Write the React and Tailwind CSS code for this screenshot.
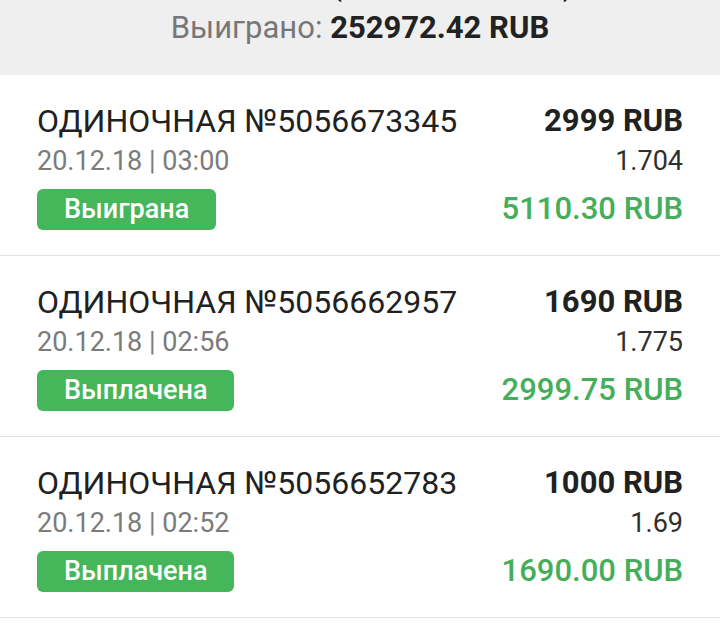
const bets = [
  {
    id: '5056673345',
    date: '20.12.18 | 03:00',
    status: 'Выиграна',
    stake: '2999 RUB',
    coef: '1.704',
    payout: '5110.30 RUB',
  },
  {
    id: '5056662957',
    date: '20.12.18 | 02:56',
    status: 'Выплачена',
    stake: '1690 RUB',
    coef: '1.775',
    payout: '2999.75 RUB',
  },
  {
    id: '5056652783',
    date: '20.12.18 | 02:52',
    status: 'Выплачена',
    stake: '1000 RUB',
    coef: '1.69',
    payout: '1690.00 RUB',
  },
]

function BetRow({ bet }) {
  return (
    <div className="flex justify-between border-b border-[#e4e4e4] bg-white pl-[37px] pr-[37px] pt-[28px] pb-[25px]">
      <div className="flex flex-col items-start">
        <p className="text-[32px] leading-[36px] text-[#212121]">
          ОДИНОЧНАЯ №{bet.id}
        </p>
        <p className="mt-[7px] text-[27px] leading-[30px] text-[#7b7b7b]">
          {bet.date}
        </p>
        <span className="mt-[13px] flex h-[41px] items-center rounded-[6px] bg-[#46b65a] px-[27px] text-[27px] font-medium text-white">
          {bet.status}
        </span>
      </div>
      <div className="flex flex-col items-end">
        <p className="text-[31px] font-bold leading-[36px] text-[#212121]">
          {bet.stake}
        </p>
        <p className="mt-[7px] text-[27px] leading-[30px] text-[#2f2f2f]">
          {bet.coef}
        </p>
        <p className="mt-[13px] flex h-[41px] items-center text-[31px] font-medium text-[#45ae5a]">
          {bet.payout}
        </p>
      </div>
    </div>
  )
}

export default function App() {
  return (
    <main className="min-h-screen bg-white font-['Roboto','Noto_Sans',sans-serif]">
      <header className="flex h-[75px] flex-col items-center overflow-hidden bg-[#efefef]">
        {/* bottom edge of the scrolled-away line above */}
        <p className="mt-[-33px] flex text-[31px] leading-[36px] text-[#222]">
          <span className="w-[185px] text-transparent">Ставки: 3</span>
          <span>(</span>
          <span className="w-[221px] text-transparent">5689.00 RUB</span>
          <span>)</span>
        </p>
        <p className="mt-[7px] text-[31px] leading-[36px] text-[#777]">
          Выиграно: <span className="font-bold text-[#222]">252972.42 RUB</span>
        </p>
      </header>
      {bets.map((bet) => (
        <BetRow key={bet.id} bet={bet} />
      ))}
    </main>
  )
}
